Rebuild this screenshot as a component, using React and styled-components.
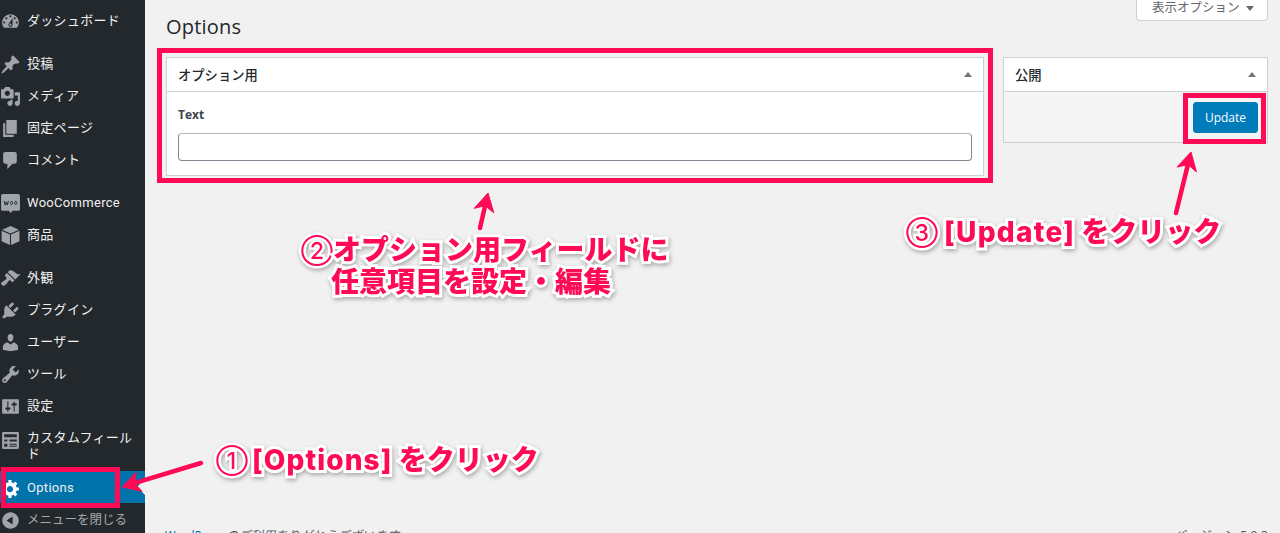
import React from 'react'
import styled, { createGlobalStyle } from 'styled-components'

const UI_FONT = `"Open Sans", "Noto Sans CJK JP", sans-serif`;
const MENU_FONT = `Roboto, "Noto Sans CJK JP", sans-serif`;
const PINK = '#ff0a55';

const GlobalStyle = createGlobalStyle`
  html, body { margin: 0; padding: 0; height: 533px; overflow: hidden; background: #f1f1f1; }
  body { font-family: ${UI_FONT}; font-size: 13px; color: #3c434a; }
`;

const Page = styled.div`
  position: relative;
  display: flex;
  width: 1280px;
  height: 533px;
  overflow: hidden;
`;

const Sidebar = styled.nav`
  flex: 0 0 145px;
  display: flex;
  flex-direction: column;
  padding-top: 4px;
  background: #23282d;
`;

const Gap = styled.div`
  flex: 0 0 11px;
`;

const MenuItem = styled.div`
  position: relative;
  display: flex;
  align-items: ${({ $tall }) => ($tall ? 'flex-start' : 'center')};
  flex: 0 0 ${({ $tall }) => ($tall ? 50 : 32)}px;
  box-sizing: border-box;
  padding-top: ${({ $tall }) => ($tall ? 9 : 2)}px;
  background: ${({ $active }) => ($active ? '#0073aa' : 'transparent')};
  color: ${({ $muted }) => ($muted ? '#a7aaad' : '#f0f0f1')};
  font-family: ${MENU_FONT};
  font-size: ${({ $muted }) => ($muted ? 12.5 : 13)}px;
  line-height: 16px;
  letter-spacing: ${({ $muted }) => ($muted ? 0 : .3)}px;

  ${({ $active }) => $active && `
    &::after {
      content: '';
      position: absolute;
      right: 0;
      top: 50%;
      margin-top: -8px;
      border: 8px solid transparent;
      border-right-color: #f1f1f1;
    }
  `}
`;

const IconSlot = styled.span`
  flex: 0 0 27px;
  display: flex;
  justify-content: flex-start;
  color: ${({ $active }) => ($active ? '#fff' : '#a0a5aa')};

  svg { display: block; width: 21px; height: 21px; fill: currentColor; }
`;

const MenuLabel = styled.span`
  flex: 1;
  padding-right: 8px;
`;

const Main = styled.main`
  flex: 1;
  display: flex;
  flex-direction: column;
  height: 558px;
  padding: 0 12px 0 21px;
`;

const TopBar = styled.div`
  display: flex;
  justify-content: flex-end;
  height: 21px;
`;

const ScreenOptions = styled.button`
  display: flex;
  align-items: center;
  gap: 6px;
  width: 132px;
  height: 22px;
  margin-top: -1px;
  padding: 0 0 2px 15px;
  box-sizing: border-box;
  background: #fff;
  border: 1px solid #ccd0d4;
  border-top: 0;
  border-radius: 0 0 4px 4px;
  color: #646970;
  font: 12.5px/1 ${UI_FONT};
`;

const Caret = styled.span`
  width: 0;
  height: 0;
  border-left: ${({ $size }) => $size || 4}px solid transparent;
  border-right: ${({ $size }) => $size || 4}px solid transparent;
  border-${({ $up }) => ($up ? 'bottom' : 'top')}: ${({ $size }) => ($size || 4) + 1}px solid ${({ $color }) => $color || '#72777c'};
`;

const Title = styled.h1`
  margin: -9px 0 0;
  height: 45px;
  font-size: 20px;
  font-weight: 400;
  line-height: 30px;
  letter-spacing: .2px;
  color: #23282d;
`;

const Columns = styled.div`
  display: flex;
  align-items: flex-start;
  gap: 19px;
`;

const Card = styled.section`
  flex: ${({ $side }) => ($side ? '0 0 265px' : '1')};
  box-sizing: border-box;
  background: #fff;
  border: 1px solid #ccd0d4;
`;

const CardHeader = styled.header`
  display: flex;
  align-items: center;
  justify-content: space-between;
  height: 33px;
  padding: 0 11px;
  border-bottom: 1px solid #ccd0d4;
  color: #23282d;
  font-size: 13.3px;
  font-weight: 500;
`;

const CardBody = styled.div`
  padding: 15px 11px 14px;
`;

const FieldLabel = styled.label`
  display: block;
  height: 26px;
  font-size: 12px;
  font-weight: 700;
  line-height: 16px;
`;

const TextInput = styled.input`
  display: block;
  width: 100%;
  height: 28px;
  box-sizing: border-box;
  background: #fff;
  border: 1px solid #7e8993;
  border-top-color: #b4b9be;
  border-radius: 4px;
`;

const CardFooter = styled.div`
  display: flex;
  justify-content: flex-end;
  padding: 10px 9px 9px;
  background: #f4f4f4;
`;

const UpdateButton = styled.button`
  width: 65px;
  height: 31px;
  padding: 0;
  background: #007cba;
  border: 1px solid #007cba;
  border-radius: 3px;
  color: #fff;
  font: 12px/1 ${UI_FONT};
`;

const Footer = styled.footer`
  display: flex;
  justify-content: space-between;
  margin: auto 0 0 -2px;
  height: 32px;
  font-size: 12.4px;
  font-style: italic;
  color: #50575e;

  a { color: #0073aa; text-decoration: underline; }
`;

const FooterRight = styled.span`
  font-style: normal;
`;

/* annotations painted on top of the screenshot */

const Frame = styled.div`
  position: absolute;
  left: ${({ $x }) => $x}px;
  top: ${({ $y }) => $y}px;
  width: ${({ $w }) => $w}px;
  height: ${({ $h }) => $h}px;
  box-sizing: border-box;
  border: ${({ $t }) => $t || 5}px solid ${PINK};
`;

const Callout = styled.div`
  position: absolute;
  left: ${({ $x }) => $x}px;
  top: ${({ $y }) => $y}px;
  color: ${PINK};
  font-family: Inter, "Noto Sans CJK JP", sans-serif;
  font-size: 28px;
  font-weight: 800;
  line-height: 32px;
  white-space: nowrap;
  -webkit-text-stroke: 6px #fff;
  paint-order: stroke fill;
  filter: drop-shadow(1px 2px 2px rgba(0, 0, 0, .3));
`;

const Circled = styled.span`
  font-size: 23px;
  font-weight: 500;
  vertical-align: 1px;
  -webkit-text-stroke: 5px #fff;
  margin-right: ${({ $mr }) => $mr || 0}px;
`;

const Wide = styled.span`
  letter-spacing: ${({ $ls }) => $ls}px;
`;

const Arrows = styled.svg`
  position: absolute;
  inset: 0;
  width: 1280px;
  height: 533px;
  pointer-events: none;
`;

// arrow with a swept-back head, like the ones from the screenshot markup tool
const Arrow = ({ x1, y1, x2, y2 }) => {
  const a = Math.atan2(y2 - y1, x2 - x1);
  const ux = Math.cos(a);
  const uy = Math.sin(a);
  const nx = -uy;
  const ny = ux;
  const len = 18;
  const wide = 10;
  const bx = x2 - ux * len;
  const by = y2 - uy * len;
  const mx = x2 - ux * (len - 5);
  const my = y2 - uy * (len - 5);
  const points = `${x2},${y2} ${bx + nx * wide},${by + ny * wide} ${mx},${my} ${bx - nx * wide},${by - ny * wide}`;
  return (
    <g fill={PINK} stroke={PINK}>
      <line x1={x1} y1={y1} x2={mx} y2={my} strokeWidth="4.5" strokeLinecap="round" />
      <polygon points={points} strokeWidth="1" strokeLinejoin="round" />
    </g>
  );
};

const P = ({ d }) => <svg viewBox="0 0 20 20"><path d={d} /></svg>;

const icons = {
  dashboard: <P d="M3.76 16h12.48c1.1-1.37 1.76-3.11 1.76-5 0-4.42-3.58-8-8-8s-8 3.58-8 8c0 1.89.66 3.63 1.76 5zM10 4c.55 0 1 .45 1 1s-.45 1-1 1-1-.45-1-1 .45-1 1-1zM6 6c.55 0 1 .45 1 1s-.45 1-1 1-1-.45-1-1 .45-1 1-1zm8 0c.55 0 1 .45 1 1s-.45 1-1 1-1-.45-1-1 .45-1 1-1zm-5.37 5.55L12 7v6c0 1.1-.9 2-2 2s-2-.9-2-2c0-.57.24-1.08.63-1.45zM4 10c.55 0 1 .45 1 1s-.45 1-1 1-1-.45-1-1 .45-1 1-1zm12 0c.55 0 1 .45 1 1s-.45 1-1 1-1-.45-1-1 .45-1 1-1zm-5 3c0-.55-.45-1-1-1s-1 .45-1 1 .45 1 1 1 1-.45 1-1z" />,
  post: <P d="M10.44 3.02l1.82-1.82 6.36 6.35-1.83 1.82c-1.05-.68-2.48-.57-3.41.36l-.75.75c-.92.93-1.04 2.35-.35 3.41l-1.83 1.82-2.41-2.41-2.8 2.79c-.42.42-3.38 2.71-3.8 2.29s1.86-3.39 2.28-3.81l2.79-2.79L4.1 9.36l1.83-1.82c1.05.69 2.48.57 3.4-.36l.75-.75c.93-.92 1.05-2.35.36-3.41z" />,
  media: <P d="M13 11V4c0-.55-.45-1-1-1h-1.67L9 1H5L3.67 3H2c-.55 0-1 .45-1 1v7c0 .55.45 1 1 1h10c.55 0 1-.45 1-1zM7 4.5c1.38 0 2.5 1.12 2.5 2.5S8.38 9.5 7 9.5 4.5 8.38 4.5 7 5.62 4.5 7 4.5zM14 6h5v10.5c0 1.38-1.12 2.5-2.5 2.5S14 17.88 14 16.5s1.12-2.5 2.5-2.5c.17 0 .34.02.5.05V9h-3V6zm-4 8.05V13h2v3.5c0 1.38-1.12 2.5-2.5 2.5S7 17.88 7 16.5 8.12 14 9.5 14c.17 0 .34.02.5.05z" />,
  page: <P d="M6 15V2h10v13H6zm-1 1h8v2H3V5h2v11z" />,
  comments: <P d="M5 2h9c1.1 0 2 .9 2 2v7c0 1.1-.9 2-2 2h-2l-5 5v-5H5c-1.1 0-2-.9-2-2V4c0-1.1.9-2 2-2z" />,
  woo: (
    <svg viewBox="0 0 20 20">
      <path d="M2.500 1h15A1.500 1.500 0 0 1 19 2.500v13a1.500 1.500 0 0 1-1.500 1.500H12l-2 2-1.500-2h-6A1.500 1.500 0 0 1 1 15.500v-13A1.500 1.500 0 0 1 2.500 1z" />
      <path d="M4 7.500l1 4 1-3 1 3 1-4M11 8a1 1.500 0 1 0 .01 0zM15 8a1 1.500 0 1 0 .01 0z" fill="none" stroke="#23282d" strokeWidth=".9" />
    </svg>
  ),
  product: (
    <svg viewBox="0 0 20 20">
      <path d="M10 1l8 3.500-8 3.500-8-3.500z" />
      <path d="M1.500 5.500l8 3.500v10l-8-3.500zM18.500 5.500v10l-8 3.500V9z" />
    </svg>
  ),
  appearance: <P d="M14.480 11.060L7.410 3.990l1.500-1.500c.5-.56 2.300-.47 3.510.32 1.210.8 1.430 1.280 2.910 2.100 1.180.64 2.450 1.260 4.450.85zm-.71.71L6.700 4.700 4.930 6.470c-.39.39-.39 1.020 0 1.410l1.060 1.060c.39.39.39 1.030 0 1.420-.6.6-1.430 1.110-2.210 1.690-.35.26-.7.53-1.010.84C1.430 13.230.4 14.750 1.800 16.150c1.410 1.410 2.920.38 4.250-.95.3-.31.58-.65.84-1 .58-.78 1.090-1.610 1.690-2.210.39-.39 1.020-.39 1.410 0l1.060 1.060c.39.39 1.020.39 1.410 0z" />,
  plugins: <P d="M13.110 4.360L9.870 7.600 8 5.730l3.240-3.240c.35-.34 1.050-.2 1.560.32.52.51.66 1.210.31 1.550zm-8 1.770l.91-1.120 9.010 9.010-1.190.84c-.71.71-2.630 1.160-3.820 1.160H6.140L4.900 17.260c-.59.59-1.540.59-2.120 0-.59-.58-.59-1.530 0-2.120l1.240-1.240v-3.880c0-1.130.4-3.190 1.090-3.890zm7.260 3.970l3.240-3.240c.34-.35 1.040-.21 1.550.31.52.51.66 1.210.31 1.550l-3.240 3.250z" />,
  users: <P d="M10 9.250c-2.270 0-2.730-3.440-2.730-3.440C7 4.020 7.820 2 9.970 2c2.160 0 2.980 2.020 2.710 3.810 0 0-.41 3.440-2.680 3.440zm0 2.570L12.720 10c2.390 0 4.520 2.330 4.520 4.530v2.490s-3.650 1.130-7.240 1.130c-3.650 0-7.240-1.130-7.240-1.130v-2.490c0-2.250 1.940-4.480 4.470-4.480z" />,
  tools: <P d="M16.680 9.770c-1.340 1.340-3.300 1.670-4.950.99l-5.410 6.520c-.99.99-2.590.99-3.580 0s-.99-2.590 0-3.570l6.520-5.420c-.68-1.650-.35-3.610.99-4.950 1.280-1.280 3.120-1.620 4.720-1.060l-2.890 2.890 2.820 2.820 2.860-2.870c.53 1.580.18 3.390-1.080 4.650zM3.810 16.210c.4.39 1.040.39 1.430 0 .4-.4.4-1.040 0-1.430-.39-.4-1.030-.4-1.430 0-.39.39-.39 1.030 0 1.430z" />,
  settings: <P d="M18 16V4c0-.55-.45-1-1-1H3c-.55 0-1 .45-1 1v12c0 .55.45 1 1 1h14c.55 0 1-.45 1-1zM8 11h1c.55 0 1 .45 1 1s-.45 1-1 1H8v1.500c0 .28-.22.5-.5.5s-.5-.22-.5-.5V13H6c-.55 0-1-.45-1-1s.45-1 1-1h1V5.500c0-.28.22-.5.5-.5s.5.22.5.5V11zm5-2h-1c-.55 0-1-.45-1-1s.45-1 1-1h1V5.500c0-.28.22-.5.5-.5s.5.22.5.5V7h1c.55 0 1 .45 1 1s-.45 1-1 1h-1v5.500c0 .28-.22.5-.5.5s-.5-.22-.5-.5V9z" />,
  fields: <P d="M3 2h14a1 1 0 0 1 1 1v14a1 1 0 0 1-1 1H3a1 1 0 0 1-1-1V3a1 1 0 0 1 1-1zm1 2v3h12V4zm0 5v2h3V9zm5 0v2h7V9zm-5 4v3h3v-3zm5 0v1h7v-1zm0 2v1h7v-1z" />,
  gear: <P d="M18 12h-2.180c-.17.7-.44 1.350-.81 1.930l1.540 1.540-2.100 2.100-1.540-1.540c-.58.36-1.230.63-1.910.79V19H8v-2.180c-.68-.16-1.330-.43-1.910-.79l-1.540 1.540-2.120-2.120 1.540-1.540c-.36-.58-.63-1.230-.79-1.910H1V9.030h2.170c.16-.7.44-1.350.8-1.940L2.430 5.550l2.100-2.100 1.540 1.540c.58-.37 1.240-.64 1.930-.81V2h3v2.180c.68.16 1.330.43 1.910.79l1.540-1.540 2.120 2.120-1.540 1.540c.36.59.64 1.240.8 1.940H18V12zm-8.500 1.500c1.660 0 3-1.340 3-3s-1.340-3-3-3-3 1.340-3 3 1.340 3 3 3z" />,
  collapse: <P d="M10 2.160c4.330 0 7.840 3.510 7.840 7.840s-3.510 7.840-7.840 7.840S2.160 14.330 2.160 10 5.710 2.160 10 2.160zm2 11.720V6.120L6.180 9.970z" />,
};

const menu = [
  { icon: 'dashboard', label: 'ダッシュボード' },
  { gap: true },
  { icon: 'post', label: '投稿' },
  { icon: 'media', label: 'メディア' },
  { icon: 'page', label: '固定ページ' },
  { icon: 'comments', label: 'コメント' },
  { gap: true },
  { icon: 'woo', label: 'WooCommerce' },
  { icon: 'product', label: '商品' },
  { gap: true },
  { icon: 'appearance', label: '外観' },
  { icon: 'plugins', label: 'プラグイン' },
  { icon: 'users', label: 'ユーザー' },
  { icon: 'tools', label: 'ツール' },
  { icon: 'settings', label: '設定' },
  { icon: 'fields', label: 'カスタムフィールド', tall: true },
  { icon: 'gear', label: 'Options', active: true },
  { icon: 'collapse', label: 'メニューを閉じる', muted: true },
];

const App = () => (
  <Page>
    <GlobalStyle />
    <Sidebar>
      {menu.map((item, i) => item.gap ? <Gap key={i} /> : (
        <MenuItem key={i} $tall={item.tall} $active={item.active} $muted={item.muted}>
          <IconSlot $active={item.active}>{icons[item.icon]}</IconSlot>
          <MenuLabel>{item.label}</MenuLabel>
        </MenuItem>
      ))}
    </Sidebar>

    <Main>
      <TopBar>
        <ScreenOptions>表示オプション <Caret $color="#646970" /></ScreenOptions>
      </TopBar>
      <Title>Options</Title>
      <Columns>
        <Card>
          <CardHeader>オプション用 <Caret $up $size={4.5} /></CardHeader>
          <CardBody>
            <FieldLabel>Text</FieldLabel>
            <TextInput type="text" />
          </CardBody>
        </Card>
        <Card $side>
          <CardHeader>公開 <Caret $up $size={4.5} /></CardHeader>
          <CardFooter>
            <UpdateButton>Update</UpdateButton>
          </CardFooter>
        </Card>
      </Columns>
      <Footer>
        <span><a>WordPress</a> のご利用ありがとうございます。</span>
        <FooterRight>バージョン 5.9.3</FooterRight>
      </Footer>
    </Main>

    <Frame $x={157} $y={48} $w={836} $h={135} />
    <Frame $x={1183} $y={93} $w={83} $h={51} />
    <Frame $x={1} $y={467} $w={119} $h={41} />

    <Arrows viewBox="0 0 1280 533">
      <Arrow x1={201} y1={463} x2={122} y2={487} />
      <Arrow x1={480} y1={228} x2={488} y2={193} />
      <Arrow x1={1176} y1={213} x2={1191} y2={152} />
    </Arrows>

    <Callout $x={216} $y={444}><Circled $mr={4}>①</Circled><Wide $ls={1.1}>[Options]</Wide> をクリック</Callout>
    <Callout $x={301} $y={234}><Circled>②</Circled>オプション用フィールドに</Callout>
    <Callout $x={331} $y={266}>任意項目を設定・編集</Callout>
    <Callout $x={906} $y={216}><Circled $mr={6}>③</Circled><Wide $ls={1.3}>[Update]</Wide> をクリック</Callout>
  </Page>
);

export default App;
